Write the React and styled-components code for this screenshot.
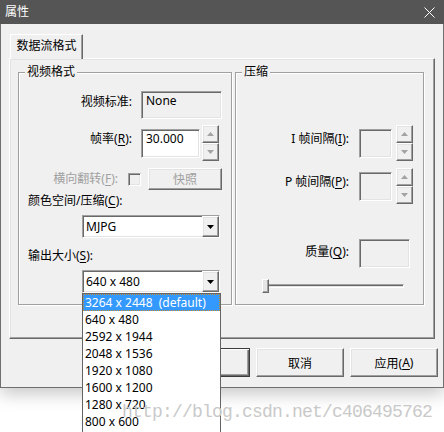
import React from 'react';
import styled, { createGlobalStyle, css } from 'styled-components';

const Global = createGlobalStyle`
  html, body { margin: 0; padding: 0; overflow: hidden; background: #fff; }
  body {
    font-family: "Noto Sans", "Noto Sans CJK SC", sans-serif;
    font-size: 12px;
    color: #000;
  }
  * { box-sizing: border-box; }
  u { text-decoration-thickness: 1px; text-underline-offset: 2px; }
`;

const sunken = css`
  border: 1px solid;
  border-color: #a0a0a0 #fff #fff #a0a0a0;
  box-shadow: inset 1px 1px 0 #696969, inset -1px -1px 0 #e3e3e3;
`;

const raised = css`
  border: 1px solid;
  border-color: #fff #696969 #696969 #fff;
  box-shadow: inset -1px -1px 0 #a0a0a0, inset 1px 1px 0 #e3e3e3;
`;

const Page = styled.div`
  width: 444px;
  height: 432px;
  display: flex;
  flex-direction: column;
`;

const Dialog = styled.div`
  position: relative;
  z-index: 1;
  width: 444px;
  box-shadow: 0 6px 16px rgba(0, 0, 0, 0.22);
`;

const TitleBar = styled.div`
  height: 24px;
  background: #555;
  color: #fff;
  display: flex;
  align-items: center;
  justify-content: space-between;
  padding: 0 9px 0 5px;
  line-height: 16px;
`;

const Body = styled.div`
  background: #f0f0f0;
  border: 1px solid #6f6f6f;
  border-top: none;
  padding: 10px 5px 10px 8px;
  display: flex;
  flex-direction: column;
`;

const TabStrip = styled.div`
  display: flex;
  height: 24px;
  padding-left: 1px;
`;

const Tab = styled.div`
  position: relative;
  z-index: 1;
  height: 25px;
  width: 73px;
  margin-bottom: -1px;
  background: #f0f0f0;
  border-left: 1px solid #fff;
  border-top: 1px solid #fff;
  border-right: 1px solid #696969;
  box-shadow: inset -1px 0 0 #a0a0a0;
  text-align: center;
  line-height: 22px;
`;

const TabPanel = styled.div`
  width: 426px;
  height: 281px;
  ${raised};
  display: flex;
  align-items: flex-start;
  gap: 3px;
  padding: 13px 0 0 8px;
`;

const Group = styled.div`
  width: ${p => p.$w}px;
  height: 233px;
  border: 1px solid #a0a0a0;
  box-shadow: inset 1px 1px 0 #fff, 1px 1px 0 #fff;
  display: flex;
  flex-direction: column;
  align-items: flex-start;
  padding-left: ${p => p.$pl}px;
`;

const GroupTitle = styled.div`
  margin: -9px 0 0 ${p => p.$ml}px;
  padding: 0 2px;
  line-height: 16px;
  background: #f0f0f0;
`;

const Row = styled.div`
  display: flex;
  align-items: center;
  height: ${p => p.$h}px;
  margin-top: ${p => p.$mt}px;
  margin-left: ${p => p.$ml || 0}px;
`;

const Label = styled.span`
  width: ${p => p.$w}px;
  flex-shrink: 0;
  text-align: right;
  white-space: nowrap;
  line-height: 16px;
  margin-bottom: ${p => (p.$lift || 0) * 2}px;
  color: ${p => (p.$disabled ? '#a0a0a0' : '#000')};
`;

const Caption = styled.div`
  line-height: 16px;
  margin-top: ${p => p.$mt}px;
  white-space: nowrap;
`;

const EditBox = styled.div`
  ${sunken};
  flex-shrink: 0;
  width: ${p => p.$w}px;
  height: ${p => p.$h}px;
  margin-left: ${p => p.$ml}px;
  background: ${p => (p.$disabled ? '#f0f0f0' : '#fff')};
  padding: 1px 4px;
  line-height: 16px;
  white-space: nowrap;
`;

const SpinWrap = styled.div`
  display: flex;
  flex-direction: column;
  width: 17px;
  margin-left: ${p => p.$ml}px;
  flex-shrink: 0;
`;

const SpinBtn = styled.div`
  ${raised};
  height: 18px;
  background: #f0f0f0;
  display: flex;
  align-items: center;
  justify-content: center;
`;

const Arrow = ({ dir, color }) => (
  <svg width="7" height="4" viewBox="0 0 7 4">
    {dir === 'up' ? (
      <polygon points="3.5,0 7,4 0,4" fill={color} />
    ) : (
      <polygon points="0,0 7,0 3.5,4" fill={color} />
    )}
  </svg>
);

const Spin = ({ ml }) => (
  <SpinWrap $ml={ml}>
    <SpinBtn><Arrow dir="up" color="#a3a3a3" /></SpinBtn>
    <SpinBtn><Arrow dir="down" color="#a3a3a3" /></SpinBtn>
  </SpinWrap>
);

const CheckBox = styled.div`
  ${sunken};
  width: 13px;
  height: 13px;
  margin-left: ${p => p.$ml}px;
  background: #f0f0f0;
  flex-shrink: 0;
`;

const PushBtn = styled.div`
  ${raised};
  width: ${p => p.$w}px;
  height: ${p => p.$h}px;
  margin-left: ${p => p.$ml || 0}px;
  background: #f0f0f0;
  display: flex;
  align-items: center;
  justify-content: center;
  flex-shrink: 0;
  color: ${p => (p.$disabled ? '#a0a0a0' : '#000')};
  ${p =>
    p.$default &&
    css`
      border: 1px solid #3c3c3c;
      box-shadow: inset 1px 1px 0 #fff, inset -1px -1px 0 #696969, inset -2px -2px 0 #a0a0a0;
    `}
`;

const Combo = styled.div`
  position: relative;
  ${sunken};
  width: 138px;
  height: 23px;
  margin-top: ${p => p.$mt}px;
  margin-left: ${p => p.$ml}px;
  background: #fff;
  display: flex;
  align-items: center;
  padding-left: 3px;
  white-space: nowrap;
`;

const DropBtn = styled.div`
  ${raised};
  margin-left: auto;
  width: 17px;
  align-self: stretch;
  background: #f0f0f0;
  display: flex;
  align-items: center;
  justify-content: center;
`;

const DropList = styled.div`
  position: absolute;
  z-index: 10;
  top: 100%;
  left: -1px;
  width: 139px;
  margin-top: 1px;
  background: #fff;
  border: 1px solid #646464;
  border-bottom: none;
  padding-bottom: 6px;
`;

const ListItem = styled.div`
  height: 17px;
  line-height: 17px;
  padding-left: 2px;
  white-space: pre;
  ${p =>
    p.$sel &&
    css`
      background: #3399ff;
      color: #fff;
      outline: 1px dotted #c98a2a;
      outline-offset: -1px;
    `}
`;

const SliderRow = styled.div`
  position: relative;
  width: 142px;
  height: 14px;
  margin-top: ${p => p.$mt}px;
  margin-left: ${p => p.$ml}px;
  display: flex;
  align-items: center;
`;

const Track = styled.div`
  width: 100%;
  height: 4px;
  border: 1px solid;
  border-color: #a0a0a0 #fff #fff #a0a0a0;
  box-shadow: inset 1px 1px 0 #696969;
  background: #e3e3e3;
`;

const Thumb = styled.div`
  position: absolute;
  left: 0;
  top: 0;
  width: 7px;
  height: 14px;
  ${raised};
  background: #e6e6e6;
`;

const ButtonRow = styled.div`
  display: flex;
  justify-content: flex-end;
  gap: 6px;
  margin-top: 9px;
`;

/* the watermark is stamped over the whole picture, including the open list */
const Watermark = styled.div`
  position: relative;
  z-index: 2;
  margin: 14px 0 0 122px;
  font-family: "Liberation Mono", monospace;
  font-size: 18px;
  letter-spacing: -0.8px;
  line-height: 20px;
  color: #c9c9c9;
  white-space: nowrap;
  pointer-events: none;
`;

const sizes = [
  '3264 x 2448  (default)',
  '640 x 480',
  '2592 x 1944',
  '2048 x 1536',
  '1920 x 1080',
  '1600 x 1200',
  '1280 x 720',
  '800 x 600',
];

export default function App() {
  return (
    <Page>
      <Global />
      <Dialog>
        <TitleBar>
          <span>属性</span>
          <svg width="11" height="11" viewBox="0 0 11 11">
            <path d="M0.5 0.5 L10.5 10.5 M10.5 0.5 L0.5 10.5" stroke="#fff" strokeWidth="1" fill="none" />
          </svg>
        </TitleBar>
        <Body>
          <TabStrip>
            <Tab>数据流格式</Tab>
          </TabStrip>
          <TabPanel>
            <Group $w={214} $pl={9}>
              <GroupTitle $ml={-3}>视频格式</GroupTitle>
              <Row $mt={11} $h={28}>
                <Label $w={104} $lift={3}>视频标准:</Label>
                <EditBox $ml={9} $w={81} $h={28} $disabled>None</EditBox>
              </Row>
              <Row $mt={6} $h={36}>
                <Label $w={104} $lift={4}>帧率(<u>R</u>):</Label>
                <EditBox $ml={9} $w={59} $h={29}>30.000</EditBox>
                <Spin ml={2} />
              </Row>
              <Row $mt={7} $h={22}>
                <Label $w={90} $disabled>横向翻转(<u>F</u>):</Label>
                <CheckBox $ml={10} />
                <PushBtn $ml={7} $w={74} $h={22} $disabled>快照</PushBtn>
              </Row>
              <Caption $mt={3}>颜色空间/压缩(<u>C</u>):</Caption>
              <Combo $mt={6} $ml={54}>
                MJPG
                <DropBtn><Arrow dir="down" color="#000" /></DropBtn>
              </Combo>
              <Caption $mt={10}>输出大小(<u>S</u>):</Caption>
              <Combo $mt={6} $ml={54}>
                640 x 480
                <DropBtn><Arrow dir="down" color="#000" /></DropBtn>
                <DropList>
                  {sizes.map((s, i) => (
                    <ListItem key={s} $sel={i === 0}>{s}</ListItem>
                  ))}
                </DropList>
              </Combo>
            </Group>
            <Group $w={189} $pl={0}>
              <GroupTitle $ml={6}>压缩</GroupTitle>
              <Row $mt={45} $h={36}>
                <Label $w={113} $lift={4.5}>I 帧间隔(<u>I</u>):</Label>
                <EditBox $ml={10} $w={33} $h={29} $disabled />
                <Spin ml={4} />
              </Row>
              <Row $mt={7} $h={36}>
                <Label $w={113} $lift={4.5}>P 帧间隔(<u>P</u>):</Label>
                <EditBox $ml={10} $w={33} $h={29} $disabled />
                <Spin ml={4} />
              </Row>
              <Row $mt={35} $h={29}>
                <Label $w={113} $lift={1.5}>质量(<u>Q</u>):</Label>
                <EditBox $ml={10} $w={51} $h={29} $disabled />
              </Row>
              <SliderRow $mt={11} $ml={26}>
                <Track />
                <Thumb />
              </SliderRow>
            </Group>
          </TabPanel>
          <ButtonRow>
            <PushBtn $w={88} $h={29} $default>确定</PushBtn>
            <PushBtn $w={88} $h={29}>取消</PushBtn>
            <PushBtn $w={88} $h={29}>应用(<u>A</u>)</PushBtn>
          </ButtonRow>
        </Body>
      </Dialog>
      <Watermark>http://blog.csdn.net/c406495762</Watermark>
    </Page>
  );
}
